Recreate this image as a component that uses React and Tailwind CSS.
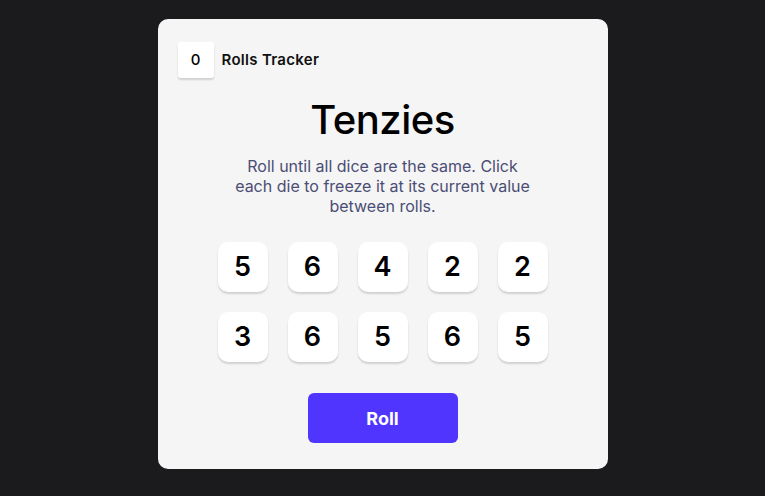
import React from "react";

const dice = [5, 6, 4, 2, 2, 3, 6, 5, 6, 5];

export default function App() {
    return (
        <div className="min-h-screen bg-[#1b1b1d] flex justify-center pt-[19px] font-['Inter',sans-serif]">
            {/* Card */}
            <main className="w-[450px] h-[450px] bg-[#f5f5f5] rounded-[10px] flex flex-col items-center px-5 pt-[23px]">
                <div className="self-start flex items-center gap-2">
                    <div className="w-9 h-9 bg-white rounded-[3px] shadow-[0_2px_2px_rgba(0,0,0,0.15)] flex items-center justify-center text-[15px] font-medium text-black">
                        0
                    </div>
                    <span className="text-[15px] font-semibold tracking-[0.3px] text-[#111]">Rolls Tracker</span>
                </div>

                <h1 className="mt-[18px] text-[40px] leading-[48px] font-medium tracking-[-0.5px] text-black">
                    Tenzies
                </h1>

                <p className="mt-3 w-[300px] text-center text-[16px] leading-5 text-[#4a4e74]">
                    Roll until all dice are the same. Click each die to freeze it at its current value between rolls.
                </p>

                {/* Dice */}
                <div className="mt-[26px] grid grid-cols-5 gap-5">
                    {dice.map((d, i) => (
                        <button
                            key={i}
                            className="w-[50px] h-[50px] bg-white rounded-[10px] shadow-[0_2px_2px_rgba(0,0,0,0.15)] flex items-center justify-center text-[27px] font-semibold text-black"
                        >
                            {d}
                        </button>
                    ))}
                </div>

                <button className="mt-[31px] w-[150px] h-[50px] bg-[#5035ff] rounded-[6px] text-white text-[18px] font-bold">
                    Roll
                </button>
            </main>
        </div>
    );
}
